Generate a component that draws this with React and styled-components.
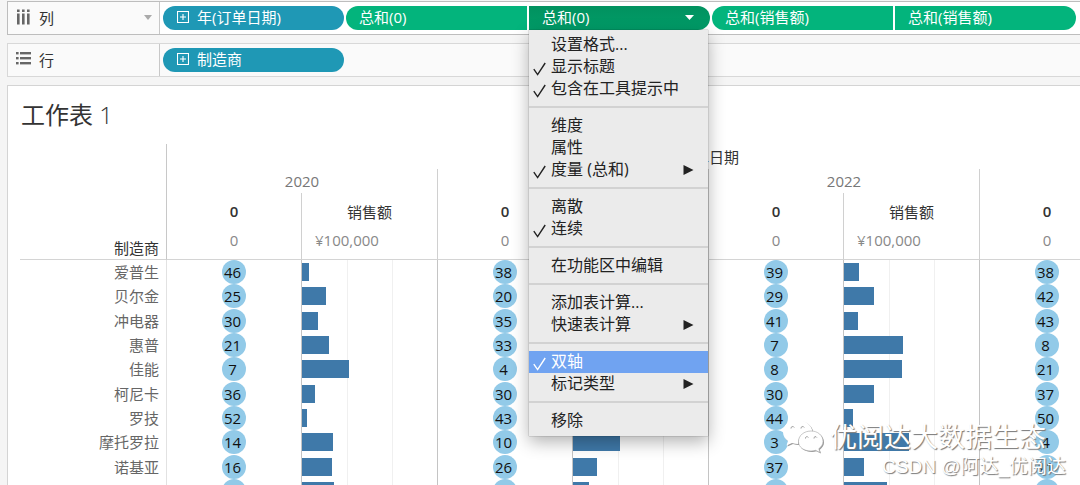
import React from 'react';
import styled, { createGlobalStyle } from 'styled-components';

const GlobalStyle = createGlobalStyle`
  * {
    box-sizing: border-box;
  }
  html,
  body,
  #root {
    height: 100%;
    margin: 0;
  }
  body {
    overflow: hidden;
    background: #f5f5f5;
    color: #333;
    font-family: "Open Sans", "Noto Sans CJK SC", sans-serif;
    font-size: 15px;
  }
`;

const Workspace = styled.div`
  position: relative;
  display: flex;
  flex-direction: column;
  gap: 8px;
  height: 100%;
  padding: 1px 0 0 7px;
  overflow: hidden;
`;

const Shelf = styled.div`
  display: flex;
  flex: none;
  height: 34px;
  border: 1px solid ${(props) => (props.$active ? '#bdbdbd' : '#d8d8d8')};
  border-right: none;
  background: #fafafa;
`;

const ShelfLabel = styled.div`
  display: flex;
  flex: none;
  align-items: center;
  gap: 8px;
  width: 152px;
  padding: 0 7px 2px 8px;
  border-right: 1px solid #c8c8c8;
`;

const ShelfArrow = styled.svg`
  margin-left: auto;
`;

const Pills = styled.div`
  display: flex;
  flex: 1;
  align-items: center;
  gap: 2px;
  padding-left: 3px;
  background: ${(props) => (props.$active ? '#fff' : 'transparent')};
`;

const pillColors = {
  dimension: '#1f98b5',
  measure: '#03b47c',
  open: 'linear-gradient(#01925f, #019c68)',
};

const pillRadius = {
  full: '12px',
  left: '12px 0 0 12px',
  right: '0 12px 12px 0',
};

const PillSlot = styled.div`
  position: relative;
  flex: none;
  width: 181px;
`;

const PillButton = styled.button`
  display: flex;
  align-items: center;
  gap: 8px;
  width: 100%;
  height: 24px;
  padding: 0 16px 2px ${(props) => (props.$tone === 'dimension' ? '14px' : '13px')};
  border: none;
  border-radius: ${(props) => pillRadius[props.$shape]};
  background: ${(props) => pillColors[props.$tone]};
  color: #fff;
  font: inherit;
  line-height: 22px;
  cursor: pointer;
`;

const PillArrow = styled.svg`
  margin-left: auto;
`;

const Menu = styled.div`
  position: absolute;
  top: 24px;
  left: 0;
  z-index: 2;
  width: 179px;
  padding: 4px 0;
  background: #ebebeb;
  box-shadow: 0 0 1px rgba(0, 0, 0, 0.5), 0 6px 16px rgba(0, 0, 0, 0.3);
`;

const MenuItem = styled.button`
  display: flex;
  align-items: center;
  width: 100%;
  height: 22px;
  padding: 0 14px 0 4px;
  border: none;
  background: ${(props) => (props.$selected ? '#70a3f1' : 'transparent')};
  color: ${(props) => (props.$selected ? '#fff' : '#222')};
  font: inherit;
  font-size: 16px;
  line-height: 20px;
  text-align: left;
  cursor: pointer;
`;

const MenuCheck = styled.span`
  display: flex;
  width: 18px;
  padding-top: 3px;
`;

const MenuText = styled.span`
  flex: 1;
  height: 22px;
  white-space: nowrap;
`;

const MenuDivider = styled.hr`
  height: 2px;
  margin: 6px 0 7px;
  border: none;
  background: #d2d2d2;
`;

const Sheet = styled.main`
  flex: 1;
  min-height: 0;
  padding-top: 12px;
  border: 1px solid #d4d4d4;
  border-right: none;
  border-bottom: none;
  background: #fff;
  overflow: hidden;
`;

const SheetTitle = styled.h1`
  margin: 0;
  padding-left: 13px;
  font-size: 24px;
  font-weight: 400;
  line-height: 34px;
`;

const SheetNumber = styled.span`
  font-weight: 300;
`;

const Crosstab = styled.table`
  width: 1230px;
  margin: 12px 0 0 12px;
  border-collapse: separate;
  border-spacing: 0;
  table-layout: fixed;

  th,
  td {
    padding: 0;
  }
`;

const LabelCol = styled.col`
  width: 147px;
`;

const CountCol = styled.col`
  width: 135px;
`;

const SalesCol = styled.col`
  width: 136px;
`;

const CornerHead = styled.th`
  border-right: 1px solid #c8c8c8;
  border-bottom: 1px solid #d4d4d4;
  && {
    padding-right: 7px;
  }
  font-weight: 400;
  line-height: 22px;
  text-align: right;
  vertical-align: bottom;
`;

const FieldHead = styled.th`
  height: 25px;
  font-weight: 400;
`;

const YearHead = styled.th`
  height: 24px;
  border-right: 1px solid #d0d0d0;
  color: #777;
  font-weight: 400;
`;

const AxisTitle = styled.th`
  height: 36px;
  border-right: 1px solid #d0d0d0;
  font-weight: ${(props) => (props.$strong ? 600 : 400)};
`;

const AxisTick = styled.th`
  height: 31px;
  && {
    padding: 0 ${(props) => (props.$sales ? '45px' : '0')} 9px 0;
  }
  border-right: 1px solid #d0d0d0;
  border-bottom: 1px solid #d4d4d4;
  color: #888;
  font-weight: 400;
  line-height: 20px;
`;

const DataRow = styled.tr`
  height: 24px;
  &:nth-child(3n) {
    height: 25px;
  }
`;

const RowHead = styled.th`
  border-right: 1px solid #e2e2e2;
  && {
    padding-right: 7px;
  }
  color: #666;
  font-weight: 400;
  line-height: 24px;
  text-align: right;
`;

const CountCell = styled.td`
  border-right: 1px solid #c4c4c4;
`;

const Mark = styled.span`
  display: block;
  width: 24px;
  height: 24px;
  margin: 0 auto;
  padding-right: 3px;
  border-radius: 50%;
  background: #92cae8;
  color: #111;
  line-height: 24px;
`;

const MarkValue = styled.span`
  display: flex;
  justify-content: center;
`;

const SalesCell = styled.td`
  border-right: 1px solid #c4c4c4;
  background: linear-gradient(#f0f0f0, #f0f0f0) 45px 0 / 1px 100% no-repeat,
    linear-gradient(#f0f0f0, #f0f0f0) 90px 0 / 1px 100% no-repeat;
`;

const Bar = styled.div`
  height: 18px;
  background: #3f79a9;
`;

const Watermark = styled.div`
  position: absolute;
  right: 14px;
  bottom: 5px;
  z-index: 3;
  display: flex;
  flex-direction: column;
  align-items: flex-end;
  color: #fff;
  text-shadow: 1px 1px 1px #777;
  pointer-events: none;
`;

const Brand = styled.div`
  display: flex;
  align-items: center;
  gap: 5px;
  padding-right: 20px;
  font-size: 27px;
  line-height: 30px;
`;

const Credit = styled.div`
  font-family: "Liberation Sans", "Noto Sans CJK SC", sans-serif;
  font-size: 19px;
  line-height: 26px;
`;

const years = ['2020', '2021', '2022', '2023'];

const rows = [
  { maker: '爱普生', counts: [46, 38, 39, 38], sales: [7, 20, 15, 12] },
  { maker: '贝尔金', counts: [25, 20, 29, 42], sales: [24, 18, 30, 20] },
  { maker: '冲电器', counts: [30, 35, 41, 43], sales: [16, 22, 14, 18] },
  { maker: '惠普', counts: [21, 33, 7, 8], sales: [27, 30, 59, 50] },
  { maker: '佳能', counts: [7, 4, 8, 21], sales: [47, 52, 58, 44] },
  { maker: '柯尼卡', counts: [36, 30, 30, 37], sales: [13, 16, 30, 22] },
  { maker: '罗技', counts: [52, 43, 44, 50], sales: [5, 8, 9, 10] },
  { maker: '摩托罗拉', counts: [14, 10, 3, 4], sales: [31, 47, 65, 60] },
  { maker: '诺基亚', counts: [16, 26, 37, 11], sales: [30, 24, 20, 34] },
  { maker: '三星', counts: [18, 22, 19, 25], sales: [32, 16, 43, 30] },
];

const menuGroups = [
  [
    { text: '设置格式...' },
    { text: '显示标题', checked: true },
    { text: '包含在工具提示中', checked: true },
  ],
  [{ text: '维度' }, { text: '属性' }, { text: '度量 (总和)', checked: true, submenu: true }],
  [{ text: '离散' }, { text: '连续', checked: true }],
  [{ text: '在功能区中编辑' }],
  [{ text: '添加表计算...' }, { text: '快速表计算', submenu: true }],
  [
    { text: '双轴', checked: true, selected: true },
    { text: '标记类型', submenu: true },
  ],
  [{ text: '移除' }],
];

const ColumnsIcon = () => (
  <svg width="15" height="16" viewBox="0 0 15 16" fill="#666" aria-hidden="true">
    {[1, 6, 11].map((x) => (
      <g key={x}>
        <rect x={x} y="0.5" width="2.6" height="2.5" />
        <rect x={x} y="4.500" width="2.6" height="11" />
      </g>
    ))}
  </svg>
);

const RowsIcon = () => (
  <svg width="15" height="16" viewBox="0 0 15 16" fill="#666" aria-hidden="true">
    {[1, 6, 11].map((y) => (
      <g key={y}>
        <rect x="0" y={y} width="2.6" height="2.4" />
        <rect x="4" y={y} width="11" height="2.4" />
      </g>
    ))}
  </svg>
);

const ExpandIcon = () => (
  <svg width="12" height="12" viewBox="0 0 12 12" fill="none" stroke="#fff" aria-hidden="true">
    <path d="M.5.5h11v11H.5zM3 6h6M6 3v6" strokeWidth="1.1" />
  </svg>
);

const CheckIcon = () => (
  <svg width="13" height="14" viewBox="0 0 13 14" fill="none" stroke="currentColor" aria-hidden="true">
    <path d="M.8 7.2 4.6 12.6 12.2 1" strokeWidth="1.4" />
  </svg>
);

const SubmenuIcon = () => (
  <svg width="11" height="10" viewBox="0 0 11 10" fill="currentColor" aria-hidden="true">
    <path d="M.5 0v10L10.5 5z" />
  </svg>
);

const ChatIcon = () => (
  <svg width="43" height="35" viewBox="0 0 43 35" fill="#fff" aria-hidden="true">
    <g fill="#999" transform="translate(1 1)">
      <path d="M15.500 1C7 1 1 6.500 1 13c0 4 2 7 5 9l-1.500 4.500L10 24c2 .6 4 1 6 1 0-8 6-13 14.500-13C29 5.500 23 1 15.500 1z" />
      <path d="M29 12c-7 0-12.500 4.500-12.500 10.500S22 32 29 32c1.500 0 3-.2 4.500-.7L38 33.500l-1.200-3.800c2.800-2 4.200-4.500 4.200-7.200C41 16.500 36 12 29 12z" />
    </g>
    <path d="M15.500 1C7 1 1 6.500 1 13c0 4 2 7 5 9l-1.500 4.500L10 24c2 .6 4 1 6 1 0-8 6-13 14.500-13C29 5.500 23 1 15.500 1z" />
    <path
      d="M29 12c-7 0-12.500 4.500-12.500 10.500S22 32 29 32c1.500 0 3-.2 4.500-.7L38 33.500l-1.200-3.800c2.800-2 4.200-4.500 4.200-7.200C41 16.500 36 12 29 12z"
      stroke="#aaa"
      strokeWidth=".6"
    />
    <g fill="none" stroke="#999">
      <path d="M9 9.500a1.700 1.700 0 0 1 3.200-1M19 9.500a1.700 1.700 0 0 1 3.200-1M23.500 19.500a1.500 1.500 0 0 1 2.800-1M32 19.500a1.500 1.500 0 0 1 2.800-1" />
    </g>
  </svg>
);

const Pill = ({ text, tone = 'measure', shape = 'full', children }) => (
  <PillSlot>
    <PillButton type="button" $tone={tone} $shape={shape} aria-expanded={tone === 'open' ? true : undefined}>
      {tone === 'dimension' && <ExpandIcon />}
      {text}
      {tone === 'open' && (
        <PillArrow width="9" height="5" viewBox="0 0 9 5" fill="#fff" aria-hidden="true">
          <path d="M0 0h9L4.500 5z" />
        </PillArrow>
      )}
    </PillButton>
    {children}
  </PillSlot>
);

const FieldMenu = () => (
  <Menu role="menu">
    {menuGroups.map((group, index) => (
      <React.Fragment key={group[0].text}>
        {index > 0 && <MenuDivider />}
        {group.map((item) => (
          <MenuItem
            key={item.text}
            type="button"
            role={item.checked ? 'menuitemcheckbox' : 'menuitem'}
            aria-checked={item.checked}
            $selected={item.selected}
          >
            <MenuCheck>{item.checked && <CheckIcon />}</MenuCheck>
            <MenuText>{item.text}</MenuText>
            {item.submenu && <SubmenuIcon />}
          </MenuItem>
        ))}
      </React.Fragment>
    ))}
  </Menu>
);

const SalesTable = () => (
  <Crosstab>
    <colgroup>
      <LabelCol />
      {years.map((year) => (
        <React.Fragment key={year}>
          <CountCol />
          <SalesCol />
        </React.Fragment>
      ))}
    </colgroup>
    <thead>
      <tr>
        <CornerHead rowSpan={4}>制造商</CornerHead>
        <FieldHead colSpan={8}>订单日期</FieldHead>
      </tr>
      <tr>
        {years.map((year) => (
          <YearHead key={year} colSpan={2}>
            {year}
          </YearHead>
        ))}
      </tr>
      <tr>
        {years.map((year) => (
          <React.Fragment key={year}>
            <AxisTitle $strong>0</AxisTitle>
            <AxisTitle>销售额</AxisTitle>
          </React.Fragment>
        ))}
      </tr>
      <tr>
        {years.map((year) => (
          <React.Fragment key={year}>
            <AxisTick>0</AxisTick>
            <AxisTick $sales>¥100,000</AxisTick>
          </React.Fragment>
        ))}
      </tr>
    </thead>
    <tbody>
      {rows.map((row) => (
        <DataRow key={row.maker}>
          <RowHead scope="row">{row.maker}</RowHead>
          {years.map((year, index) => (
            <React.Fragment key={year}>
              <CountCell>
                <Mark>
                  <MarkValue>{row.counts[index]}</MarkValue>
                </Mark>
              </CountCell>
              <SalesCell>
                <Bar style={{ width: row.sales[index] }} />
              </SalesCell>
            </React.Fragment>
          ))}
        </DataRow>
      ))}
    </tbody>
  </Crosstab>
);

const App = () => {
  return (
    <>
      <GlobalStyle />
      <Workspace>
        <Shelf $active>
          <ShelfLabel>
            <ColumnsIcon />
            列
            <ShelfArrow width="8" height="5" viewBox="0 0 8 5" fill="#aaa" aria-hidden="true">
              <path d="M0 0h8L4 5z" />
            </ShelfArrow>
          </ShelfLabel>
          <Pills $active>
            <Pill text="年(订单日期)" tone="dimension" />
            <Pill text="总和(0)" shape="left" />
            <Pill text="总和(0)" tone="open" shape="right">
              <FieldMenu />
            </Pill>
            <Pill text="总和(销售额)" shape="left" />
            <Pill text="总和(销售额)" shape="right" />
          </Pills>
        </Shelf>
        <Shelf>
          <ShelfLabel>
            <RowsIcon />
            行
          </ShelfLabel>
          <Pills>
            <Pill text="制造商" tone="dimension" />
          </Pills>
        </Shelf>
        <Sheet>
          <SheetTitle>
            工作表 <SheetNumber>1</SheetNumber>
          </SheetTitle>
          <SalesTable />
        </Sheet>
        <Watermark>
          <Brand>
            <ChatIcon />
            优阅达大数据生态
          </Brand>
          <Credit>CSDN @阿达_优阅达</Credit>
        </Watermark>
      </Workspace>
    </>
  );
};

export default App;
